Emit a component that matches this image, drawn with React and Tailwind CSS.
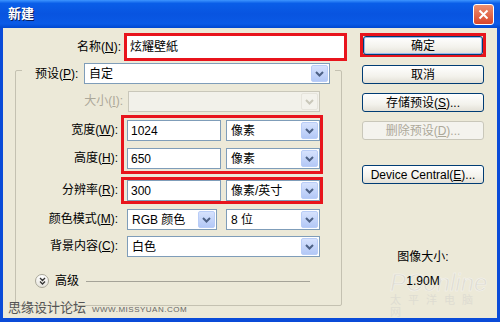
import React from "react";

const Chevron = ({ disabled }) => (
  <svg width="9" height="6" viewBox="0 0 9 6">
    <path d="M1 1l3.5 3.5L8 1" stroke={disabled ? "#c9c7ba" : "#4d6185"} strokeWidth="2" fill="none" />
  </svg>
);

const Select = ({ value, w, disabled }) => (
  <div
    className={`${w} h-[21px] flex items-center border ${
      disabled ? "border-[#c9c7ba] bg-[#f2f1ea]" : "border-[#7f9db9] bg-white"
    }`}
  >
    <span className="flex-1 pl-[4px] whitespace-nowrap overflow-hidden">{value}</span>
    <div
      className={`w-[17px] h-[17px] mr-[1px] rounded-[2px] flex items-center justify-center border ${
        disabled
          ? "border-[#e6e4dc] bg-[#f3f2ec]"
          : "border-[#b9cdf7] bg-[linear-gradient(to_bottom,#d6e2fd,#b3c8f6)]"
      }`}
    >
      <Chevron disabled={disabled} />
    </div>
  </div>
);

const Input = ({ value, w }) => (
  <div className={`${w} h-[21px] flex items-center border border-[#7f9db9] bg-white pl-[3px]`}>{value}</div>
);

const Btn = ({ children, disabled, className = "" }) => (
  <div
    className={`h-[19px] flex items-center justify-center rounded-[3px] border whitespace-nowrap ${
      disabled
        ? "border-[#c9c7ba] text-[#aca899] bg-[#f4f3ee]"
        : "border-[#003c74] bg-[linear-gradient(to_bottom,#ffffff,#f3f2ec_60%,#e3e0d6)]"
    } ${className}`}
  >
    {children}
  </div>
);

const Label = ({ children, className = "" }) => (
  <div className={`h-[21px] leading-[21px] text-right whitespace-nowrap ${className}`}>{children}</div>
);

export default function App() {
  return (
    <div className="w-[500px] h-[322px] bg-[#0a4bd8] flex flex-col text-[12px] text-black font-['Liberation_Sans','Noto_Sans_CJK_SC',sans-serif] relative overflow-hidden">
      {/* Title bar */}
      <div className="h-[28px] flex items-center justify-between bg-[linear-gradient(to_bottom,#3d95ff_0%,#0a5ee8_12%,#0854e0_50%,#0a5ae6_85%,#0048d0_100%)]">
        <span className="ml-[8px] text-white font-bold text-[13px] [text-shadow:1px_1px_0_#0a1e5e]">新建</span>
        <div className="mr-[6px] w-[21px] h-[21px] rounded-[3px] border border-white bg-[linear-gradient(to_bottom,#ec9070,#d8452a)] flex items-center justify-center">
          <svg width="11" height="11" viewBox="0 0 11 11">
            <path d="M1.5 1.5l8 8M9.5 1.5l-8 8" stroke="white" strokeWidth="2" />
          </svg>
        </div>
      </div>

      {/* Body */}
      <div className="flex-1 mx-[3px] mb-[4px] bg-[#ece9d8] flex relative">
        {/* faint PConline watermark, behind content */}
        <div className="absolute left-[387px] top-[244px] flex flex-col items-start text-[#dedcd2] pointer-events-none">
          <span className="text-[24px] leading-[22px] italic [-webkit-text-stroke:0.5px_#f6f5f0]">PConline</span>
          <span className="text-[11px] tracking-[7px] leading-[12px]">太平洋电脑网</span>
        </div>

        {/* Left */}
        <div className="w-[347px] flex flex-col pt-[5px] relative">
          <div className="flex h-[28px]">
            <div className="w-[118px] text-right leading-[28px]">
              名称(<u>N</u>):
            </div>
            <div className="ml-[3px] w-[223px] h-[28px] border-[3px] border-[#e8141c] bg-white flex items-center pl-[3px]">
              炫耀壁紙
            </div>
          </div>

          {/* Group box */}
          <div className="mt-[9px] ml-[12px] w-[327px] h-[236px] border border-[#c4c1b1] rounded-[2px] flex flex-col">
            <div className="-mt-[8px] ml-[6px] w-[313px] h-[21px] bg-[#ece9d8] flex items-center pl-[13px] pr-[5px]">
              <div className="w-[49px] whitespace-nowrap">
                预设(<u>P</u>):
              </div>
              <Select value="自定" w="w-[246px]" />
            </div>

            <div className="mt-[7px] flex">
              <Label className="w-[107px] text-[#aca899]">
                大小(<u>I</u>):
              </Label>
              <div className="ml-[5px]">
                <Select value="" w="w-[192px]" disabled />
              </div>
            </div>

            <div className="mt-[3px] flex">
              <div className="w-[105px] flex flex-col gap-[7px] pt-[5px] pr-[3px]">
                <Label>
                  宽度(<u>W</u>):
                </Label>
                <Label>
                  高度(<u>H</u>):
                </Label>
              </div>
              <div className="w-[202px] border-[3px] border-[#e8141c] pt-[2px] pb-[2px] pl-[3px] flex flex-col gap-[7px]">
                <div className="flex gap-[5px]">
                  <Input value="1024" w="w-[94px]" />
                  <Select value="像素" w="w-[94px]" />
                </div>
                <div className="flex gap-[5px]">
                  <Input value="650" w="w-[94px]" />
                  <Select value="像素" w="w-[94px]" />
                </div>
              </div>
            </div>

            <div className="mt-[3px] flex">
              <div className="w-[105px] pt-[3px] pr-[3px]">
                <Label>
                  分辨率(<u>R</u>):
                </Label>
              </div>
              <div className="w-[202px] border-[3px] border-[#e8141c] pl-[3px] flex gap-[5px]">
                <Input value="300" w="w-[94px]" />
                <Select value="像素/英寸" w="w-[94px]" />
              </div>
            </div>

            <div className="mt-[5px] flex">
              <Label className="w-[105px] pr-[3px]">
                颜色模式(<u>M</u>):
              </Label>
              <div className="ml-[6px] flex gap-[9px]">
                <Select value="RGB 颜色" w="w-[90px]" />
                <Select value="8 位" w="w-[94px]" />
              </div>
            </div>

            <div className="mt-[6px] flex">
              <Label className="w-[105px] pr-[3px]">
                背景内容(<u>C</u>):
              </Label>
              <div className="ml-[6px]">
                <Select value="白色" w="w-[193px]" />
              </div>
            </div>

            <div className="mt-[17px] h-[14px] flex items-center">
              <div className="ml-[19px] w-[14px] h-[14px] rounded-full border border-[#a8a698] bg-[linear-gradient(to_bottom,#ffffff,#e6e4dc)] flex items-center justify-center">
                <svg width="7" height="8" viewBox="0 0 7 8">
                  <path d="M1 1l2.5 2.5L6 1M1 4.5l2.5 2.5L6 4.5" stroke="#333" strokeWidth="1.3" fill="none" />
                </svg>
              </div>
              <span className="ml-[6px]">高级</span>
              <div className="ml-[7px] mr-[31px] flex-1 h-px bg-[#a5a398]" />
            </div>
          </div>
        </div>

        {/* Right */}
        <div className="flex-1 flex flex-col pt-[5px] pl-[10px] relative">
          <div className="w-[126px] h-[24px] border-[3px] border-[#e8141c] flex">
            <Btn className="w-[120px] h-[18px] border-[#003c74] shadow-[inset_0_0_0_1px_#9ab8ef]">确定</Btn>
          </div>
          <Btn className="mt-[8px] ml-[2px] w-[122px]">取消</Btn>
          <Btn className="mt-[9px] ml-[2px] w-[122px]">
            存储预设(<u>S</u>)...
          </Btn>
          <Btn disabled className="mt-[9px] ml-[2px] w-[122px]">
            删除预设(<u>D</u>)...
          </Btn>
          <Btn className="mt-[25px] ml-[2px] w-[122px]">
            Device Central(<u>E</u>)...
          </Btn>
          <div className="mt-[66px] ml-[2px] w-[122px] text-center leading-[14px]">图像大小:</div>
          <div className="mt-[10px] ml-[2px] w-[122px] text-center leading-[14px]">1.90M</div>
        </div>
      </div>

      {/* Site watermark */}
      <div className="absolute left-[8px] top-[298px] flex items-baseline text-[#555] whitespace-nowrap">
        <span className="text-[13px]">思缘设计论坛</span>
        <span className="ml-[6px] text-[8px] tracking-[0.5px] text-[#666]">WWW.MISSYUAN.COM</span>
      </div>
    </div>
  );
}
